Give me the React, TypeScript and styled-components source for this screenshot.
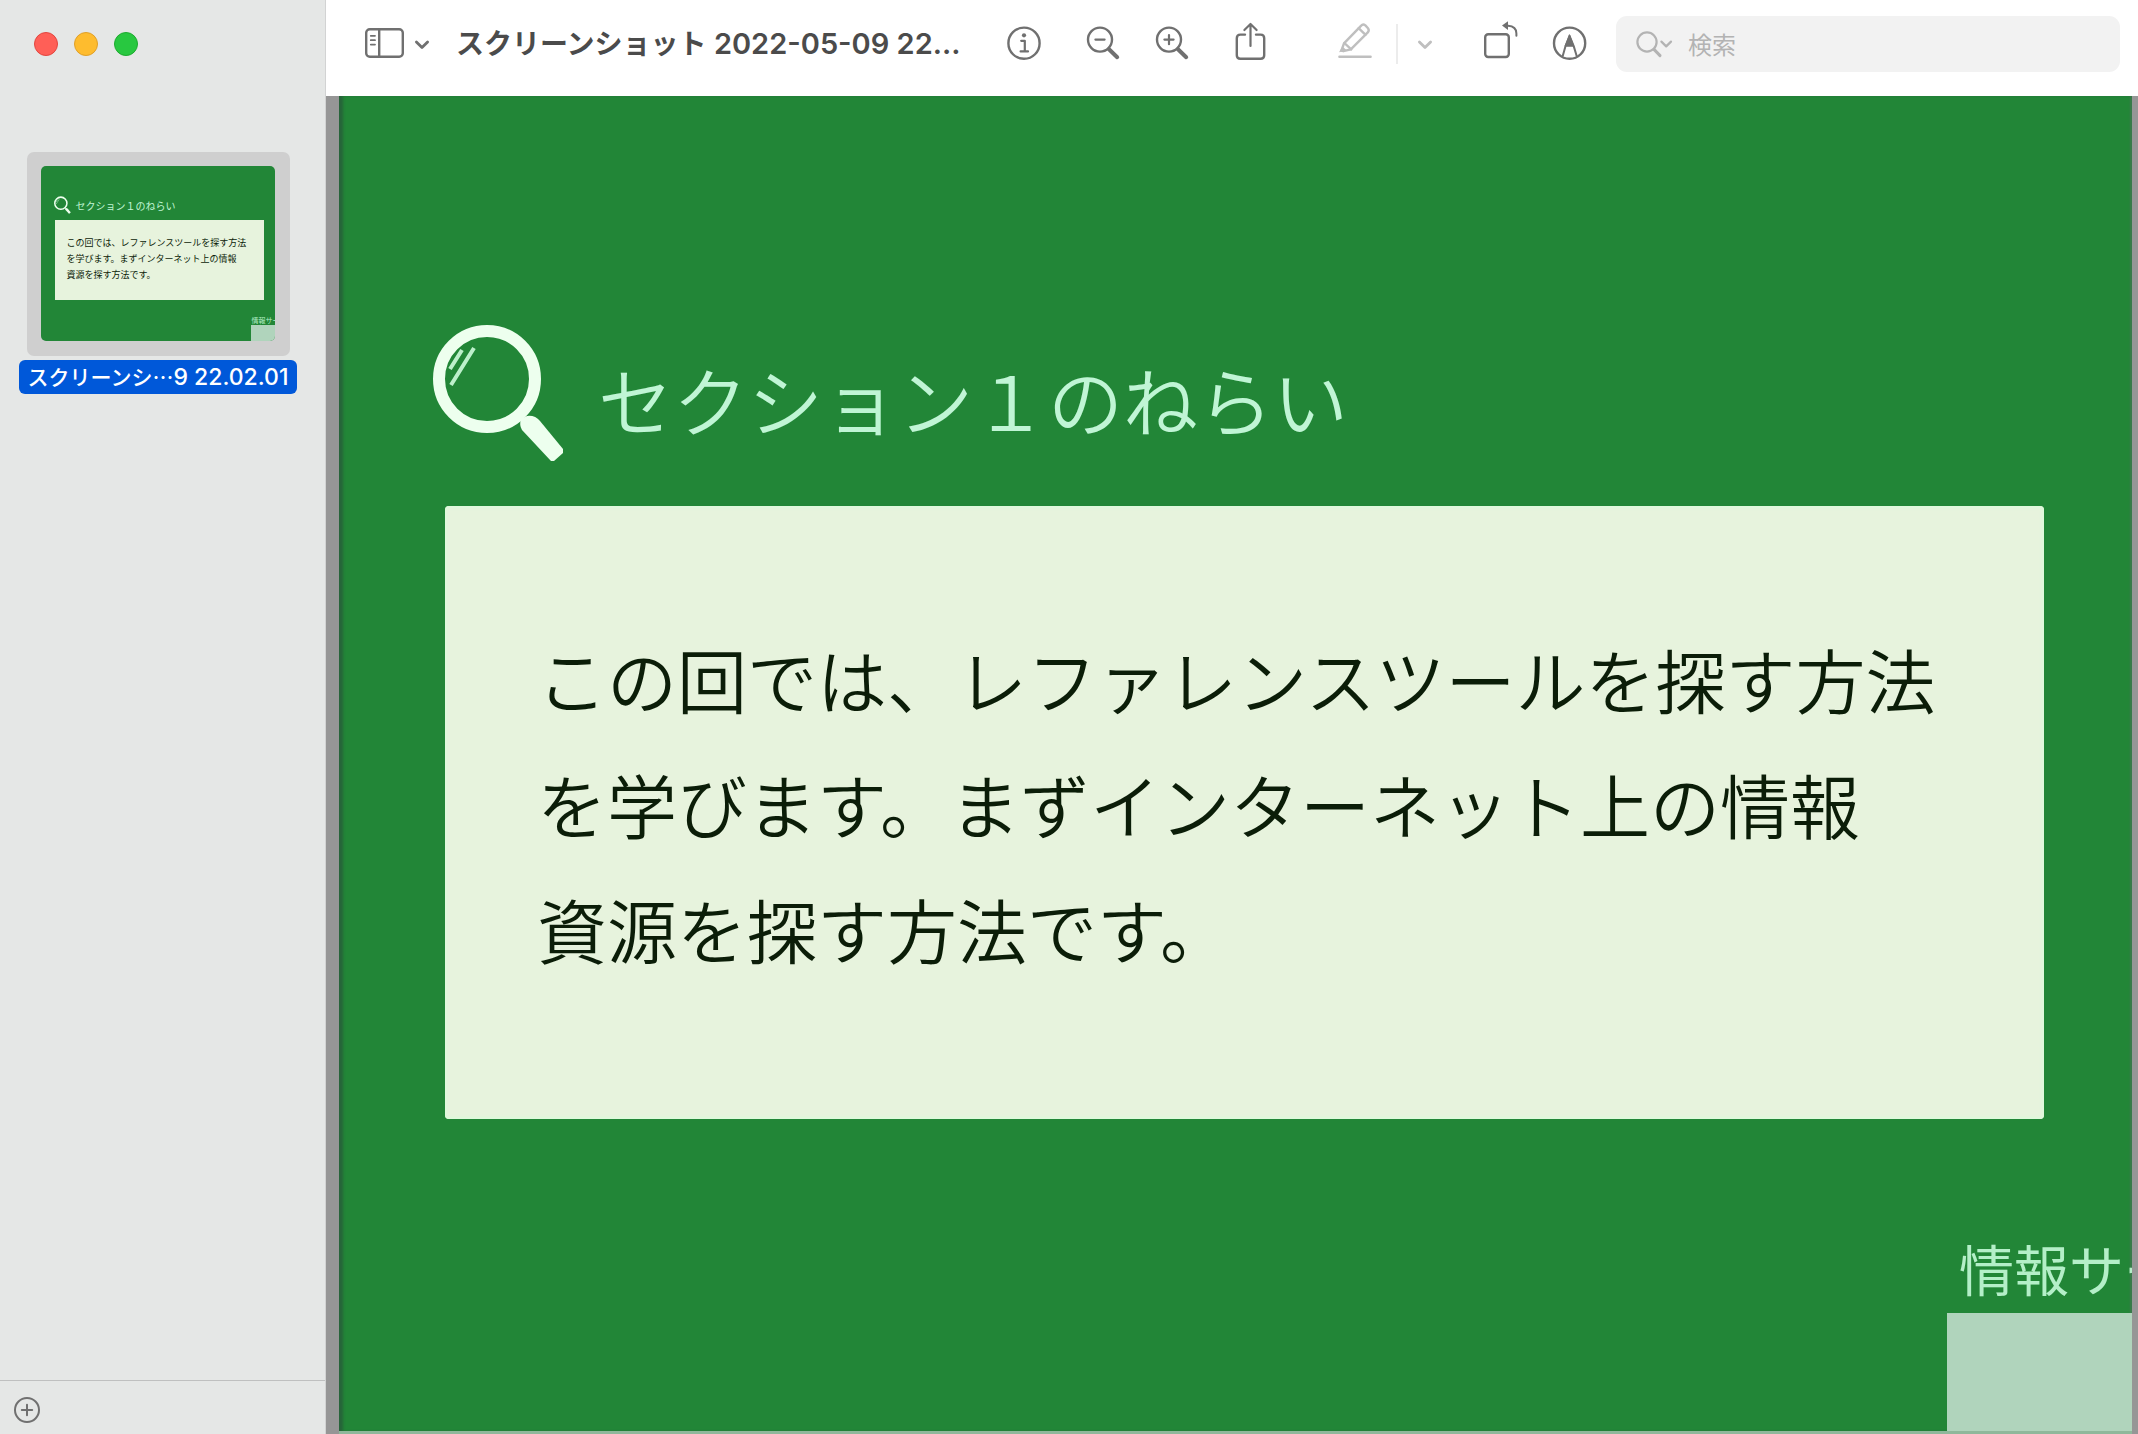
import React from "react";
import styled, { createGlobalStyle, css } from "styled-components";

const GlobalStyle = createGlobalStyle`
  *, *::before, *::after { box-sizing: border-box; }
  body { margin: 0; background: #e5e7e6; }
  button { border: 0; padding: 0; background: none; color: inherit; font: inherit; }
`;

const Window = styled.div`
  display: grid;
  grid-template-columns: 326px minmax(0, 1fr);
  height: 100vh;
  overflow: hidden;
  font-family: Inter, "Noto Sans CJK JP", sans-serif;
`;

/* ---------- sidebar ---------- */

const Sidebar = styled.aside`
  display: flex;
  flex-direction: column;
  min-height: 0;
  background: #e5e7e6;
  border-right: 1px solid #d2d3d3;
`;

const TrafficLights = styled.div`
  display: flex;
  gap: 16px;
  padding: 32px 34px 0;
`;

const Light = styled.button<{ $fill: string; $edge: string }>`
  width: 24px;
  height: 24px;
  border-radius: 50%;
  background: ${(p) => p.$fill};
  border: 1px solid ${(p) => p.$edge};
`;

const Thumbnails = styled.ul`
  flex: 1;
  margin: 0;
  padding: 96px 28px 0 19px;
  list-style: none;
`;

const Thumbnail = styled.li`
  display: flex;
  flex-direction: column;
  align-items: center;
  gap: 4px;
`;

const ThumbFrame = styled.div`
  width: 263px;
  height: 204px;
  padding: 14px 15px 15px 14px;
  border-radius: 7px;
  background: #cfcfcf;
`;

const ThumbName = styled.div`
  width: 278px;
  height: 34px;
  border-radius: 6px;
  background: #0058d9;
  color: #fff;
  font-size: 23px;
  font-weight: 500;
  line-height: 34px;
  text-align: center;
  white-space: nowrap;
`;

const SidebarFooter = styled.footer`
  display: flex;
  align-items: center;
  height: 54px;
  padding: 4px 13px 0;
  border-top: 1px solid #bfc0c0;
  color: #6f6f6f;
`;

/* ---------- toolbar ---------- */

const Main = styled.main`
  display: flex;
  flex-direction: column;
  min-width: 0;
  min-height: 0;
`;

const Toolbar = styled.header`
  display: flex;
  flex: none;
  align-items: center;
  height: 96px;
  padding: 0 18px 8px 38px;
  background: #fff;
  color: #707070;
`;

const ToolButton = styled.button<{ $before?: number; $faded?: boolean }>`
  display: flex;
  flex: none;
  margin-left: ${(p) => p.$before ?? 0}px;
  color: ${(p) => (p.$faded ? "#bfbfbf" : "#707070")};
`;

const Title = styled.h1`
  flex: 0 1 512px;
  min-width: 0;
  margin: 0 0 0 26px;
  overflow: hidden;
  color: #4b4b4b;
  font-size: 29px;
  font-weight: 600;
  line-height: 44px;
  white-space: nowrap;
`;

const Kana = styled.span<{ $size: number }>`
  font-size: ${(p) => p.$size}px;
`;

const Divider = styled.div`
  flex: none;
  width: 2px;
  height: 40px;
  margin-left: 21px;
  background: #ececec;
`;

const Search = styled.label`
  display: flex;
  flex: 1 1 200px;
  align-items: center;
  gap: 15px;
  height: 56px;
  min-width: 0;
  margin-left: 27px;
  padding: 0 20px;
  border-radius: 11px;
  background: #f2f2f2;
  color: #b3b3b3;
`;

const SearchInput = styled.input`
  flex: 1;
  min-width: 0;
  padding: 4px 0 0;
  border: 0;
  outline: 0;
  background: none;
  font-family: Inter, "Noto Sans CJK JP", sans-serif;
  font-size: 24px;
  line-height: 36px;
  &::placeholder { color: #b3b3b3; opacity: 1; }
`;

/* ---------- document ---------- */

const Canvas = styled.section`
  display: flex;
  flex: 1;
  min-height: 0;
  padding: 0 6px 0 13px;
  background: #969696;
`;

type Size = "page" | "thumb";

const SlideRoot = styled.article<{ $size: Size }>`
  display: flex;
  flex: 1;
  flex-direction: column;
  min-width: 0;
  height: 100%;
  overflow: hidden;
  background: #228637;
  font-family: "Noto Sans CJK JP", sans-serif;
  ${(p) =>
    p.$size === "page"
      ? css`
          padding-top: 228px;
          border-bottom: 3px solid #8fb89b;
          box-shadow: inset 5px 0 3px -1px #27643a, inset -3px 0 2px -1px #3c7a4c;
        `
      : css`
          padding-top: 30px;
          border-radius: 5px;
        `}
`;

const SlideHeader = styled.div<{ $size: Size }>`
  display: flex;
  flex: none;
  align-items: flex-end;
  gap: ${(p) => (p.$size === "page" ? 31 : 5)}px;
  padding-left: ${(p) => (p.$size === "page" ? 94 : 13)}px;
`;

const Loupe = styled.svg<{ $size: Size }>`
  flex: none;
  width: ${(p) => (p.$size === "page" ? 134 : 17)}px;
  height: ${(p) => (p.$size === "page" ? 138 : 18)}px;
`;

const SlideTitle = styled.h2<{ $size: Size }>`
  margin: 0;
  color: #c0f5d5;
  font-weight: ${(p) => (p.$size === "page" ? 350 : 400)};
  font-size: ${(p) => (p.$size === "page" ? 75 : 10)}px;
  line-height: ${(p) => (p.$size === "page" ? 126 : 16)}px;
  white-space: nowrap;
`;

const SlideCard = styled.p<{ $size: Size }>`
  flex: none;
  background: #e7f3dd;
  color: #0b1d08;
  white-space: nowrap;
  ${(p) =>
    p.$size === "page"
      ? css`
          margin: 44px 88px 0 106px;
          padding: 110px 0 128px 92px;
          border-radius: 4px;
          box-shadow: inset 0 0 3px 2px #defadb;
          font-size: 70px;
          font-weight: 350;
          line-height: 125px;
        `
      : css`
          margin: 6px 11px 0 14px;
          padding: 15px 0 17px 12px;
          font-size: 9px;
          font-weight: 400;
          line-height: 16px;
        `}
`;

const SlideCorner = styled.div<{ $size: Size }>`
  display: flex;
  flex: 1;
  flex-direction: column;
  align-self: flex-end;
  overflow: hidden;
  width: ${(p) => (p.$size === "page" ? 185 : 24)}px;
  margin-top: ${(p) => (p.$size === "page" ? 106 : 15)}px;
`;

const CornerLabel = styled.div<{ $size: Size }>`
  flex: none;
  padding: ${(p) => (p.$size === "page" ? "0 0 4px 12px" : "0 0 0 1px")};
  color: #b4efc8;
  font-size: ${(p) => (p.$size === "page" ? 55 : 7)}px;
  line-height: ${(p) => (p.$size === "page" ? 84 : 10)}px;
  white-space: nowrap;
`;

const CornerBox = styled.div`
  flex: 1;
  background: #b0d4bc;
`;

function Slide({ size }: { size: Size }) {
  return (
    <SlideRoot $size={size}>
      <SlideHeader $size={size}>
        <Loupe $size={size} viewBox="0 0 134 138" aria-hidden="true">
          <circle cx="54" cy="55" r="48" fill="none" stroke="#edffee" strokeWidth="12" />
          <path d="M88 95L94 92Q102 91 107 97L130 125V129L121 137H118L89 106Q86 101 88 95Z" fill="#edffee" />
          <path d="M29 26L17 45M41 24L18 61" fill="none" stroke="#bdf0cb" strokeWidth="4" />
        </Loupe>
        <SlideTitle $size={size}>セクション１のねらい</SlideTitle>
      </SlideHeader>
      <SlideCard $size={size}>
        この回では、レファレンスツールを探す方法
        <br />
        を学びます。まずインターネット上の情報
        <br />
        資源を探す方法です。
      </SlideCard>
      <SlideCorner $size={size}>
        <CornerLabel $size={size}>情報サー</CornerLabel>
        <CornerBox />
      </SlideCorner>
    </SlideRoot>
  );
}

/* ---------- icons ---------- */

function Icon({ children }: { children: React.ReactNode }) {
  return (
    <svg
      width="40"
      height="48"
      viewBox="0 0 40 48"
      fill="none"
      stroke="currentColor"
      strokeWidth="2.4"
      strokeLinecap="round"
      strokeLinejoin="round"
      aria-hidden="true"
    >
      {children}
    </svg>
  );
}

function Chevron() {
  return (
    <svg width="16" height="48" viewBox="0 0 16 48" fill="none" stroke="currentColor" strokeWidth="2.8" strokeLinecap="round" strokeLinejoin="round" aria-hidden="true">
      <path d="M2.4 22L8 27.6L13.6 22" />
    </svg>
  );
}

export default function App() {
  return (
    <>
      <GlobalStyle />
      <Window>
        <Sidebar>
          <TrafficLights>
            <Light $fill="#ff5f57" $edge="#e2463f" aria-label="閉じる" />
            <Light $fill="#febc2e" $edge="#e0a028" aria-label="しまう" />
            <Light $fill="#28c840" $edge="#1dab2f" aria-label="拡大" />
          </TrafficLights>
          <Thumbnails>
            <Thumbnail>
              <ThumbFrame>
                <Slide size="thumb" />
              </ThumbFrame>
              <ThumbName>
                <Kana $size={21}>スクリーンシ⋯</Kana>9 22.02.01
              </ThumbName>
            </Thumbnail>
          </Thumbnails>
          <SidebarFooter>
            <ToolButton aria-label="追加">
              <svg width="28" height="28" viewBox="0 0 28 28" fill="none" stroke="currentColor" strokeWidth="2" strokeLinecap="round" aria-hidden="true">
                <circle cx="14" cy="14" r="12" />
                <path d="M14 8.8V19.2M8.8 14H19.2" />
              </svg>
            </ToolButton>
          </SidebarFooter>
        </Sidebar>

        <Main>
          <Toolbar>
            <ToolButton aria-label="サイドバー">
              <Icon>
                <rect x="2.2" y="9.2" width="36.6" height="27.6" rx="3.6" />
                <path d="M15.2 9.2V36.8" />
                <path d="M6.8 15.8H11M6.8 20.2H11M6.8 24.6H11" strokeWidth="1.8" />
              </Icon>
            </ToolButton>
            <ToolButton $before={10} aria-label="表示メニュー">
              <Chevron />
            </ToolButton>
            <Title>
              <Kana $size={28}>スクリーンショット</Kana> 2022-05-09 22...
            </Title>
            <ToolButton $before={36} aria-label="情報">
              <Icon>
                <circle cx="20" cy="23.2" r="15.6" />
                <circle cx="20" cy="15.3" r="2.1" fill="currentColor" stroke="none" />
                <path d="M17.2 20.8H20.8V31.2M16.6 31.4H24" strokeWidth="2.2" />
              </Icon>
            </ToolButton>
            <ToolButton $before={39} aria-label="縮小">
              <Icon>
                <circle cx="17" cy="19.6" r="12" />
                <path d="M12.4 19.6H21.6" strokeWidth="2.2" />
                <path d="M26 29.2L34.2 37.2" strokeWidth="4" />
              </Icon>
            </ToolButton>
            <ToolButton $before={29} aria-label="拡大表示">
              <Icon>
                <circle cx="17" cy="19.6" r="12" />
                <path d="M12.4 19.6H21.6M17 15V24.2" strokeWidth="2.2" />
                <path d="M26 29.2L34.2 37.2" strokeWidth="4" />
              </Icon>
            </ToolButton>
            <ToolButton $before={38} aria-label="共有">
              <Icon>
                <path d="M15 14.6H10.4Q6.8 14.6 6.8 18.2V35.2Q6.8 38.8 10.4 38.8H30.6Q34.2 38.8 34.2 35.2V18.2Q34.2 14.6 30.6 14.6H26" />
                <path d="M20.5 26V4.6M14.4 10L20.5 4L26.6 10" strokeWidth="2.2" />
              </Icon>
            </ToolButton>
            <ToolButton $before={65} $faded aria-label="ハイライト">
              <Icon>
                <path d="M4.4 36.8H35.6" />
                <path d="M9 23.4L26.2 5.6Q28 3.6 30.4 5.4L33 8.2Q34.6 10.2 32.8 12.4L15.8 29.4L8.4 31.2L6.4 30.6Z" />
                <path d="M9.4 23L16.2 29.4M23.6 8.2L30.6 14.8" />
                <path d="M4 32.2L7.4 26.4L12 30.6Z" fill="currentColor" stroke="none" />
              </Icon>
            </ToolButton>
            <Divider />
            <ToolButton $before={19} $faded aria-label="ハイライトの色">
              <Chevron />
            </ToolButton>
            <ToolButton $before={46} aria-label="回転">
              <Icon>
                <rect x="6.2" y="14.2" width="23.6" height="22.8" rx="3" />
                <path d="M37.4 15.8V13.4Q37.4 6.4 29 5.8" strokeWidth="2" />
                <path d="M23 5.6L29 1.2V10Z" fill="currentColor" stroke="none" />
              </Icon>
            </ToolButton>
            <ToolButton $before={30} aria-label="マークアップ">
              <Icon>
                <circle cx="20.6" cy="23.2" r="15.6" />
                <path d="M20.6 16L24.8 26.4L27.6 35.8M20.6 16L16.4 26.4L13.8 35.8" strokeWidth="2" />
                <path d="M20.6 15L24.8 26.2H16.4Z" fill="currentColor" strokeWidth="1" />
              </Icon>
            </ToolButton>
            <Search htmlFor="search-box">
              <svg width="37" height="48" viewBox="0 0 37 48" fill="none" stroke="currentColor" strokeWidth="2.2" strokeLinecap="round" strokeLinejoin="round" aria-hidden="true">
                <circle cx="11" cy="22" r="9.6" />
                <path d="M18 29.4L24 35.6" strokeWidth="3" />
                <path d="M25.4 21.6L30.2 26.4L35 21.6" />
              </svg>
              <SearchInput id="search-box" type="text" placeholder="検索" aria-label="検索" />
            </Search>
          </Toolbar>
          <Canvas>
            <Slide size="page" />
          </Canvas>
        </Main>
      </Window>
    </>
  );
}
